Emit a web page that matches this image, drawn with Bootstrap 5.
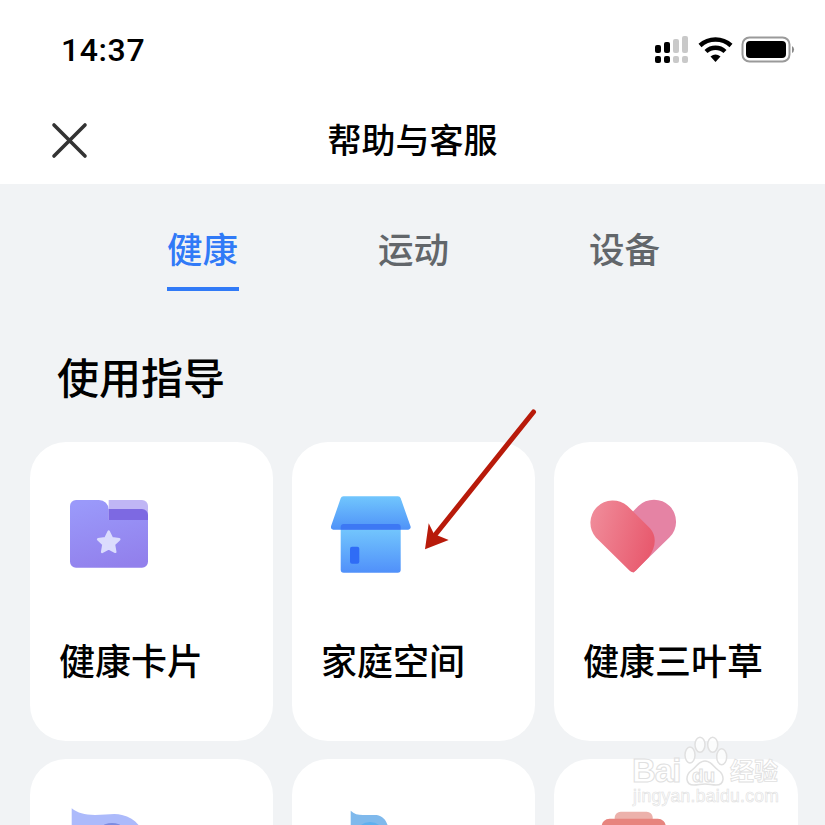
<!DOCTYPE html>
<html>
<head>
  <title>帮助与客服</title>
  <meta charset="UTF-8" />
  <link href="https://cdn.jsdelivr.net/npm/bootstrap@5.3.2/dist/css/bootstrap.min.css" rel="stylesheet">
  <style>
    html, body { height: 825px; overflow: hidden; }
    body { background: #f1f3f5; font-family: "Liberation Sans", "Noto Sans CJK SC", sans-serif; color: #000; }
    .app-screen { position: relative; width: 825px; height: 825px; overflow: hidden; }
    .top-head { background: #fff; height: 184px; padding: 0 30px 0 51px; }
    .status-row { height: 100px; }
    .clock { font-family: Roboto, "Liberation Sans", sans-serif; font-size: 32px; font-weight: 500; margin: 0 0 0 10px; letter-spacing: .6px; }
    .title-row { height: 84px; position: relative; padding-top: 21px; }
    .close-x { display: block; }
    .page-title { font-size: 34px; font-weight: 500; position: absolute; left: -51px; right: -30px; top: 0; text-align: center; line-height: 82px; }
    .tab-row { height: 107px; padding-left: 167px; gap: 139px; }
    .tab-item { font-size: 35.500px; font-weight: 500; color: #62666a; line-height: 36px; padding-top: 49px; position: relative; width: 72px; white-space: nowrap; }
    .tab-item.is-active { color: #317af7; }
    .tab-item.is-active::after { content: ""; position: absolute; left: 0; right: 0; top: 103px; height: 4px; background: #317af7; }
    .section-title { font-size: 42px; font-weight: 500; margin: 67px 0 0 57px; line-height: 44px; height: 84px; }
    .tile-grid { display: grid; grid-template-columns: 243px 243px 244px; gap: 18px 19px; padding-left: 30px; }
    .tile { background: #fff; border-radius: 36px; height: 299px; padding: 0 0 0 30px; }
    .tile-icon { display: block; margin-top: 44px; height: 100px; }
    .tile-icon.in-low { margin-top: 35px; }
    .nudge-10 { margin-left: 10px; }
    .nudge-9 { margin-left: 9px; }
    .nudge-5 { margin-left: 5px; }
    .nudge-8 { margin-left: 8px; }
    .nudge-28 { margin-left: 28px; }
    .nudge-17 { margin-left: 17px; }
    .tile-name { font-size: 36px; font-weight: 500; line-height: 40px; margin: 57px 0 0 -1px; white-space: nowrap; }
    .arrow-over { position: absolute; left: 415px; top: 400px; }
    .wm { position: absolute; left: 630px; top: 735px; }
    .wm-paw { position: absolute; left: 50px; top: 0; }
    .wm-text { position: absolute; font-weight: 700; color: rgba(255,255,255,.7); -webkit-text-stroke: 1px #e0e0e0; white-space: nowrap; line-height: 1; }
    .wm-bai { left: 2px; top: 19px; font-size: 33px; letter-spacing: -1px; }
    .wm-du { left: 62px; top: 31px; font-size: 19px; }
    .wm-cn { left: 100px; top: 25px; font-size: 24px; -webkit-text-stroke-width: .8px; }
    .wm-url { left: 3px; top: 53px; font-size: 17.500px; font-weight: 400; -webkit-text-stroke-width: .6px; letter-spacing: .3px; }
  </style>
</head>
<body>
  <div class="app-screen">
    <div class="top-head">
      <div class="status-row d-flex align-items-center justify-content-between">
        <div class="clock">14:37</div>
        <svg width="140" height="28" viewBox="0 0 140 28">
          <g fill="#000">
            <rect x="0" y="9" width="6" height="8" rx="2"/><rect x="0" y="20" width="6" height="7" rx="2"/>
            <rect x="9" y="6" width="6" height="11" rx="2"/><rect x="9" y="20" width="6" height="7" rx="2"/>
          </g>
          <g fill="#c9c9c9">
            <rect x="18" y="3" width="6" height="14" rx="2"/><rect x="18" y="20" width="6" height="7" rx="2"/>
            <rect x="27" y="0" width="6" height="17" rx="2"/><rect x="27" y="20" width="6" height="7" rx="2"/>
          </g>
          <path d="M45 9.500a23 23 0 0 1 31 0" fill="none" stroke="#000" stroke-width="4.400"/>
          <path d="M51 15.500a14 14 0 0 1 19 0" fill="none" stroke="#000" stroke-width="4.400"/>
          <path d="M55.500 20.500a8 8 0 0 1 10 0L60.500 26z" fill="#000"/>
          <rect x="87.500" y="1.500" width="47" height="24" rx="7" fill="none" stroke="#9a9a9a" stroke-width="2"/>
          <rect x="91" y="5" width="40" height="17" rx="4" fill="#000"/>
          <path d="M137 10a4 4 0 0 1 0 7z" fill="#8a8a8a"/>
        </svg>
      </div>
      <div class="title-row">
        <svg class="close-x" width="38" height="38" viewBox="0 0 38 38">
          <path d="M3 4L34 35M34 4L3 35" stroke="#333" stroke-width="3.600" stroke-linecap="round"/>
        </svg>
        <div class="page-title">帮助与客服</div>
      </div>
    </div>

    <div class="tab-row d-flex">
      <div class="tab-item is-active">健康</div>
      <div class="tab-item">运动</div>
      <div class="tab-item">设备</div>
    </div>

    <div class="section-title">使用指导</div>

    <div class="tile-grid">
      <div class="tile">
        <svg class="tile-icon nudge-10" width="90" height="100" viewBox="0 0 90 100">
          <defs>
            <linearGradient id="fg" x1="0.300" y1="0" x2="0.600" y2="1"><stop offset="0" stop-color="#9a99fa"/><stop offset="1" stop-color="#9280ec"/></linearGradient>
          </defs>
          <path d="M38.700 14H72a6 6 0 0 1 6 6v15H38.700z" fill="#c0b6f5"/>
          <path d="M0 20a6 6 0 0 1 6-6h23a9.700 9.700 0 0 1 9.700 9.700V34H78v41.700a6 6 0 0 1-6 6H6a6 6 0 0 1-6-6z" fill="url(#fg)"/>
          <path d="M38.700 23H72a6 6 0 0 1 6 6v5H38.700z" fill="#7d69e2"/>
          <path d="M38.700 45.500l3.300 6.800 7.300 1-5.300 5.200 1.300 7.400-6.600-3.500-6.600 3.500 1.300-7.400-5.300-5.200 7.300-1z" fill="#dbdcfd" stroke="#dbdcfd" stroke-width="2.400" stroke-linejoin="round"/>
        </svg>
        <div class="tile-name">健康卡片</div>
      </div>
      <div class="tile">
        <svg class="tile-icon nudge-9" width="90" height="100" viewBox="0 0 90 100">
          <defs>
            <linearGradient id="rf" x1="0" y1="0" x2="0" y2="1"><stop offset="0" stop-color="#71c6fd"/><stop offset="1" stop-color="#4f92f8"/></linearGradient>
            <linearGradient id="wl" x1="0" y1="0" x2="0" y2="1"><stop offset="0" stop-color="#72c5fd"/><stop offset="1" stop-color="#5090fa"/></linearGradient>
          </defs>
          <path d="M9.700 43.700h60v40a3 3 0 0 1-3 3h-54a3 3 0 0 1-3-3z" fill="url(#wl)"/>
          <path d="M9.700 12.300a3 3 0 0 1 3-2h54a3 3 0 0 1 3 2l9.800 28a2.500 2.500 0 0 1-2.300 3.400H2.300A2.500 2.500 0 0 1 0 40.300z" fill="url(#rf)"/>
          <path d="M9.700 43.700V41a3 3 0 0 1 3-3h54a3 3 0 0 1 3 3v2.700z" fill="#3d78f4"/>
          <rect x="19" y="60.700" width="9.300" height="17" rx="2" fill="#2f6cf6"/>
        </svg>
        <div class="tile-name">家庭空间</div>
      </div>
      <div class="tile">
        <svg class="tile-icon nudge-5" width="100" height="100" viewBox="0 0 100 100">
          <defs>
            <linearGradient id="hg" x1="0" y1="0.200" x2="1" y2="0.500"><stop offset="0" stop-color="#f08c9a"/><stop offset="1" stop-color="#e85a6e"/></linearGradient>
          </defs>
          <path d="M43.700 25.700L49.400 20.100A22 22 0 0 1 80.600 51.300L44 87z" fill="#e583a4"/>
          <path d="M38.500 19.900L61 42.300Q71 54 60 71L47 84.500Q43.700 88 40.400 84.500L6.900 51.500A22.400 22.400 0 0 1 38.500 19.900z" fill="url(#hg)"/>
        </svg>
        <div class="tile-name">健康三叶草</div>
      </div>
      <div class="tile">
        <svg class="tile-icon in-low nudge-8" width="90" height="100" viewBox="0 0 90 100">
          <path d="M3.700 14.300C10 19 16 21 27 21C38 21 47 19 54 21C62 23 68 27 72 33V70H3.700z" fill="#acbafb"/>
          <ellipse cx="44" cy="47" rx="18" ry="18" fill="#7c8be0"/>
        </svg>
      </div>
      <div class="tile">
        <svg class="tile-icon in-low nudge-28" width="90" height="100" viewBox="0 0 90 100">
          <path d="M.700 16.700C4 20 8 21 13 21H26.700C33 22 37 27 38 33V70H.700z" fill="#7fb9ec"/>
          <circle cx="20" cy="43" r="15" fill="#5fb0ef"/>
        </svg>
      </div>
      <div class="tile">
        <svg class="tile-icon in-low nudge-17" width="90" height="100" viewBox="0 0 90 100">
          <path d="M13.700 26v-3a6 6 0 0 1 6-5.300h26a6 6 0 0 1 6 5.300v3z" fill="#ecb1ab"/>
          <path d="M.6 50V32.700a8 8 0 0 1 8-8h48.200a8 8 0 0 1 8 8V50z" fill="#e7847e"/>
        </svg>
      </div>
    </div>

    <svg class="arrow-over" width="130" height="160" viewBox="0 0 130 160">
      <path d="M118.500 12L20 135" stroke="#b81a0a" stroke-width="5" stroke-linecap="round"/>
      <path d="M10 149.300L13.700 123.300L19 134L33.700 140z" fill="#b81a0a"/>
    </svg>

    <div class="wm">
      <svg class="wm-paw" width="60" height="70" viewBox="0 0 60 70">
        <g fill="rgba(255,255,255,.7)" stroke="#e0e0e0" stroke-width="1.500">
          <ellipse cx="10" cy="20" rx="5" ry="8"/><ellipse cx="20" cy="9.700" rx="5" ry="7.500"/><ellipse cx="32.700" cy="9.700" rx="5" ry="7.500"/><ellipse cx="41.700" cy="21.700" rx="5" ry="8"/>
          <path d="M25 26C31 26 33 31 38 35C45 40 45 50 36 50C32 50 29 49 25 49C21 49 18 50 14 50C5 50 5 40 12 35C17 31 19 26 25 26z"/>
        </g>
      </svg>
      <span class="wm-text wm-bai">Bai</span>
      <span class="wm-text wm-du">du</span>
      <span class="wm-text wm-cn">经验</span>
      <span class="wm-text wm-url">jingyan.baidu.com</span>
    </div>
  </div>
  <script src="https://cdn.jsdelivr.net/npm/bootstrap@5.3.2/dist/js/bootstrap.bundle.min.js"></script>
</body>
</html>
